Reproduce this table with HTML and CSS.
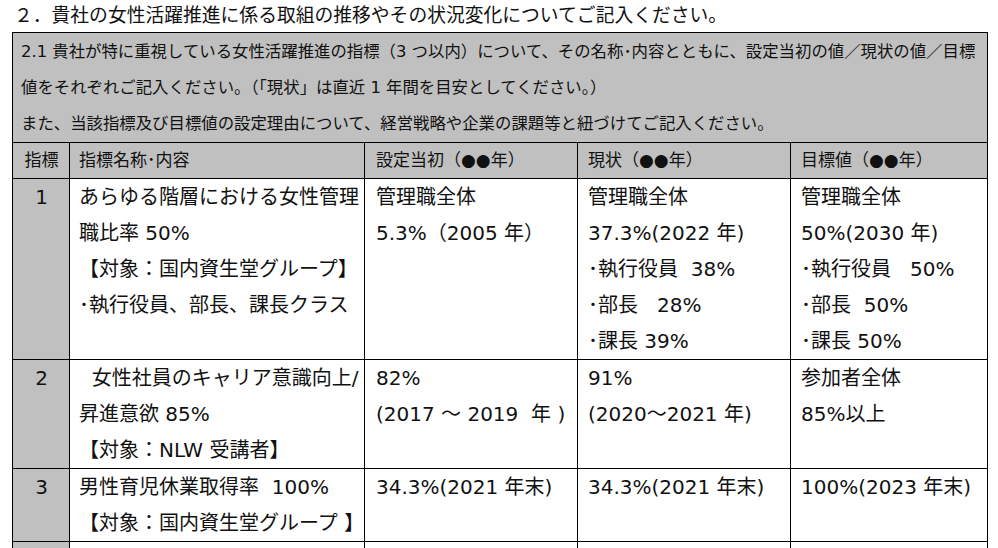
FILE: index.html
```html
<!DOCTYPE html>
<html lang="ja">
<head>
<meta charset="utf-8">
<title>女性活躍推進の指標</title>
<link rel="stylesheet" href="styles.css">
</head>
<body>
<div class="page">
  <h1 class="title">２．貴社の女性活躍推進に係る取組の推移やその状況変化についてご記入ください。</h1>
  <table class="sheet">
    <colgroup>
      <col class="w-no">
      <col class="w-name">
      <col class="w-val">
      <col class="w-val">
      <col class="w-goal">
    </colgroup>
    <tbody>
      <tr>
        <td class="intro" colspan="5">
          <div>2.1 貴社が特に重視している女性活躍推進の指標（3 つ以内）について、その名称･内容とともに、設定当初の値／現状の値／目標</div>
          <div>値をそれぞれご記入ください。（「現状」は直近 1 年間を目安としてください。）</div>
          <div>また、当該指標及び目標値の設定理由について、経営戦略や企業の課題等と紐づけてご記入ください。</div>
        </td>
      </tr>
      <tr class="head">
        <td class="no">指標</td>
        <td class="name">指標名称･内容</td>
        <td class="val">設定当初（●●年）</td>
        <td class="val2">現状（●●年）</td>
        <td class="val2">目標値（●●年）</td>
      </tr>
      <tr class="row">
        <td class="no">1</td>
        <td class="name">
          <div>あらゆる階層における女性管理</div>
          <div>職比率 50%</div>
          <div>【対象：国内資生堂グループ】</div>
          <div>･執行役員、部長、課長クラス</div>
        </td>
        <td class="val">
          <div>管理職全体</div>
          <div>5.3%（2005 年）</div>
        </td>
        <td class="val2">
          <div>管理職全体</div>
          <div>37.3%(2022 年)</div>
          <div>･執行役員&nbsp;&nbsp;38%</div>
          <div>･部長&nbsp;&nbsp;&nbsp;28%</div>
          <div>･課長&nbsp;39%</div>
        </td>
        <td class="val2">
          <div>管理職全体</div>
          <div>50%(2030 年)</div>
          <div>･執行役員&nbsp;&nbsp;&nbsp;50%</div>
          <div>･部長&nbsp;&nbsp;50%</div>
          <div>･課長&nbsp;50%</div>
        </td>
      </tr>
      <tr class="row">
        <td class="no">2</td>
        <td class="name">
          <div>&nbsp;&nbsp;女性社員のキャリア意識向上/</div>
          <div>昇進意欲 85%</div>
          <div>【対象：NLW 受講者】</div>
        </td>
        <td class="val">
          <div>82%</div>
          <div>(2017 ～ 2019&nbsp;&nbsp;年 )</div>
        </td>
        <td class="val2">
          <div>91%</div>
          <div>(2020～2021 年)</div>
        </td>
        <td class="val2">
          <div>参加者全体</div>
          <div>85%以上</div>
        </td>
      </tr>
      <tr class="row">
        <td class="no">3</td>
        <td class="name">
          <div>男性育児休業取得率&nbsp;&nbsp;100%</div>
          <div>【対象：国内資生堂グループ&nbsp;】</div>
        </td>
        <td class="val"><div>34.3%(2021 年末)</div></td>
        <td class="val2"><div>34.3%(2021 年末)</div></td>
        <td class="val2"><div>100%(2023 年末)</div></td>
      </tr>
      <tr class="row">
        <td class="no">&nbsp;</td>
        <td class="name"><div>&nbsp;</div></td>
        <td class="val"></td>
        <td class="val2"></td>
        <td class="val2"></td>
      </tr>
    </tbody>
  </table>
</div>
</body>
</html>
```

FILE: styles.css
```css
* { box-sizing: border-box; }

html, body {
  margin: 0;
  padding: 0;
  overflow: hidden;
  background: #ffffff;
}

body {
  font-family: "DejaVu Sans", "Noto Sans CJK JP", sans-serif;
  color: #111111;
}

.page {
  padding-left: 12px;
}

.title {
  margin: 0;
  padding-left: 2px;
  height: 32px;
  font-size: 18.8px;
  font-weight: normal;
  line-height: 32px;
  white-space: nowrap;
}

.sheet {
  border-collapse: collapse;
  table-layout: fixed;
  width: 976px;
}

.w-no { width: 57px; }
.w-name { width: 295px; }
.w-val { width: 213px; }
.w-goal { width: 197px; }

.sheet td {
  border: 1px solid #000000;
  padding: 0;
  vertical-align: top;
  white-space: nowrap;
  overflow: hidden;
}

.intro {
  background: #c0c0c0;
  font-size: 16.4px;
  line-height: 36px;
  padding: 1px 8px 0 8px !important;
}

.head td {
  background: #c0c0c0;
  font-size: 17px;
  line-height: 35px;
}

.row td {
  font-size: 20px;
  line-height: 36px;
}

.sheet .no {
  background: #c0c0c0;
  text-align: center;
  padding-left: 1px;
}

.sheet .name { padding-left: 9px; }
.sheet .val { padding-left: 11px; }
.sheet .val2 { padding-left: 10px; }
```
